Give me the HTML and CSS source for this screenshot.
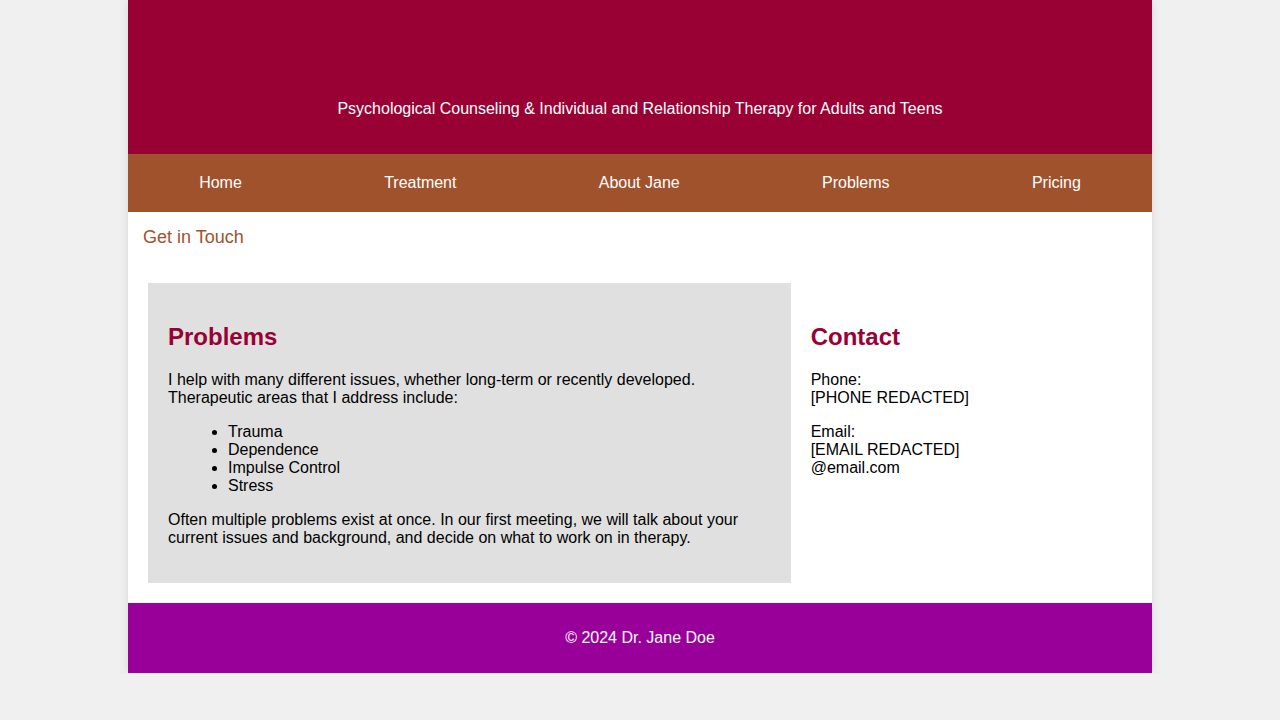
FILE: index.html
```html
<!DOCTYPE html>
<html lang="en">
<head>
<meta charset="utf-8">
<title>Dr. Jane Doe - Problems</title>
<link rel="stylesheet" href="styles.css">
</head>
<body>
<div class="page">
  <header class="site-header">
    <p class="tagline">Psychological Counseling &amp; Individual and Relationship Therapy for Adults and Teens</p>
  </header>
  <nav class="main-nav">
    <a href="#">Home</a>
    <a href="#">Treatment</a>
    <a href="#">About Jane</a>
    <a href="#">Problems</a>
    <a href="#">Pricing</a>
  </nav>
  <div class="touch"><a href="#">Get in Touch</a></div>
  <main class="content">
    <section class="problems">
      <h2>Problems</h2>
      <p>I help with many different issues, whether long-term or recently developed. Therapeutic areas that I address include:</p>
      <ul>
        <li>Trauma</li>
        <li>Dependence</li>
        <li>Impulse Control</li>
        <li>Stress</li>
      </ul>
      <p>Often multiple problems exist at once. In our first meeting, we will talk about your current issues and background, and decide on what to work on in therapy.</p>
    </section>
    <aside class="contact">
      <h2>Contact</h2>
      <p>Phone:<br>[PHONE REDACTED]</p>
      <p>Email:<br>[EMAIL REDACTED]<br>@email.com</p>
    </aside>
  </main>
  <footer class="site-footer">
    <p>© 2024 Dr. Jane Doe</p>
  </footer>
</div>
</body>
</html>
```
FILE: styles.css
```css
html, body {
  margin: 0;
  padding: 0;
}
body {
  background: #f0f0f0;
  font-family: Arial, "Liberation Sans", sans-serif;
  font-size: 16px;
  color: #000;
}
.page {
  width: 1024px;
  margin: 0 auto;
  background: #fff;
  box-shadow: 0 0 10px rgba(0, 0, 0, 0.1);
}
.site-header {
  background: #990033;
  color: #fff;
  text-align: center;
  padding: 84px 20px 20px;
}
.tagline {
  margin: 16px 0;
}
.main-nav {
  background: #a0522d;
  display: flex;
  justify-content: space-around;
  padding: 20px 0;
}
.main-nav a {
  color: #fff;
  text-decoration: none;
  line-height: 18px;
}
.touch {
  padding: 15px;
  font-size: 18px;
}
.touch a {
  color: #a0522d;
  text-decoration: none;
}
.content {
  display: flex;
  padding: 20px;
}
.problems {
  flex: 2;
  background: #e0e0e0;
  padding: 20px;
}
.contact {
  flex: 1;
  padding: 20px;
}
h2 {
  color: #990033;
  font-size: 24px;
  margin: 20px 0 20px;
}
.problems p, .contact p {
  margin: 16px 0;
}
.problems ul {
  margin: 16px 0;
  padding-left: 60px;
}
.site-footer {
  background: #990099;
  color: #fff;
  text-align: center;
  padding: 10px;
}
.site-footer p {
  margin: 16px 0;
}
```
